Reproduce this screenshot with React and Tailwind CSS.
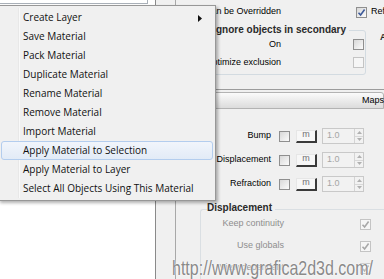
const menuFont = { fontFamily: '"Open Sans", "Noto Sans", sans-serif' }
const uiFont = { fontFamily: '"Liberation Sans", Arial, sans-serif' }

const items = [
  'Create Layer',
  'Save Material',
  'Pack Material',
  'Duplicate Material',
  'Rename Material',
  'Remove Material',
  'Import Material',
  'Apply Material to Selection',
  'Apply Material to Layer',
  'Select All Objects Using This Material',
]

function Check({ checked, disabled, tone }) {
  return (
    <div
      className={
        'w-[11px] h-[11px] shrink-0 border flex items-center justify-center ' +
        (disabled
          ? 'border-[#c4c4c4] bg-[#f6f6f6]'
          : 'border-[#8f8f8f] bg-gradient-to-br from-[#d8d8d8] to-[#fbfbfb]')
      }
    >
      {checked && (
        <svg width="9" height="9" viewBox="0 0 9 9">
          <path
            d="M1.5 4.8 L3.6 7 L7.6 1.6"
            fill="none"
            stroke={tone === 'blue' ? '#3d5a9a' : '#a8a8a8'}
            strokeWidth="1.6"
          />
        </svg>
      )}
    </div>
  )
}

function MapRow({ label }) {
  return (
    <div className="h-[20px] flex items-center mb-[4px]">
      <div className="w-[95px] shrink-0 text-right text-[9px] text-black whitespace-nowrap">{label}</div>
      <div className="ml-[8px]">
        <Check />
      </div>
      <div className="ml-[6px] w-[21px] h-[13px] shrink-0 flex items-center justify-center text-[9px] text-[#707070] bg-[#f7f7f7] border-t border-l border-t-[#e6e6e6] border-l-[#e6e6e6] border-b-2 border-r-2 border-b-[#3a3a3a] border-r-[#3a3a3a] leading-none pb-[2px]">
        m
      </div>
      <div className="ml-[5px] w-[42px] h-[16px] shrink-0 border border-[#c9c9c9] bg-[#f2f2f2] flex">
        <div className="flex-1 pl-[4px] text-[9px] text-[#a5a5a5] flex items-center">1.0</div>
        <div className="w-[9px] border-l border-[#d4d4d4] flex flex-col">
          <div className="flex-1 flex items-center justify-center border-b border-[#d8d8d8]">
            <svg width="5" height="3" viewBox="0 0 5 3"><path d="M0 3 L2.5 0 L5 3Z" fill="#b0b0b0" /></svg>
          </div>
          <div className="flex-1 flex items-center justify-center">
            <svg width="5" height="3" viewBox="0 0 5 3"><path d="M0 0 L2.5 3 L5 0Z" fill="#b0b0b0" /></svg>
          </div>
        </div>
      </div>
    </div>
  )
}

function DispRow({ label }) {
  return (
    <div className="h-[22px] flex items-center">
      <div className="w-[83px] shrink-0 text-right text-[9px] text-[#8e8e8e] whitespace-nowrap">{label}</div>
      <div className="ml-[76px]">
        <Check checked disabled />
      </div>
    </div>
  )
}

export default function App() {
  return (
    <div className="relative w-[384px] h-[279px] overflow-hidden bg-[#f0f0f0]" style={uiFont}>
      <div className="flex h-full">
        <div className="w-[156px] shrink-0 bg-white border-r border-[#8a8a8a]">
          <div className="h-[4px] w-[148px] border-b border-r border-[#a9b0b8]" />
        </div>
        <div className="w-[20px] shrink-0 bg-[#f0f0f0] border-r border-[#a8a8a8]" />

        <div className="flex-1 min-w-0 flex flex-col">
          <div className="h-[16px] mt-[5px] flex items-center">
            <div className="w-[105px] shrink-0 text-right text-[9px] text-black whitespace-nowrap">Can be Overridden</div>
            <div className="ml-[75px]">
              <Check checked tone="blue" />
            </div>
            <div className="ml-[4px] text-[9px] text-black whitespace-nowrap">Reflection</div>
          </div>

          <div className="flex mt-[11px]">
            <div className="ml-[7px] w-[183px] shrink-0 border border-[#d3dbe1] rounded-[3px] pb-[4px]">
              <div className="-mt-[8px] h-[14px] flex justify-end pr-[16px]">
                <span className="bg-[#f0f0f0] pl-[3px] pr-[3px] text-[10px] font-bold text-[#2a2a2a] leading-[14px] whitespace-nowrap">
                  Ignore objects in secondary
                </span>
              </div>
              <div className="h-[15px] flex items-center">
                <div className="w-[97px] shrink-0 text-right text-[9px] text-black">On</div>
                <div className="ml-[72px]">
                  <Check />
                </div>
              </div>
              <div className="h-[15px] mt-[3px] flex items-center">
                <div className="w-[97px] shrink-0 text-right text-[9px] text-black whitespace-nowrap">Optimize exclusion</div>
                <div className="ml-[72px]">
                  <Check disabled />
                </div>
              </div>
            </div>
            <div className="pl-[14px] pt-[1px] text-[9px] font-bold text-[#2a2a2a] whitespace-nowrap">Affect</div>
          </div>

          <div className="mt-[14px] h-px bg-[#9c9c9c]" />
          <div className="mt-[2px] ml-[4px] h-[19px] border border-[#b3b3b3] rounded-t-[3px] bg-gradient-to-b from-[#fbfbfb] to-[#dcdcdc] flex items-center pl-[181px] text-[9px] text-black">
            Maps
          </div>

          <div className="mt-[17px]">
            <MapRow label="Bump" />
            <MapRow label="Displacement" />
            <MapRow label="Refraction" />
          </div>

          <div className="mt-[11px] ml-[24px] w-[260px] shrink-0 border-t border-l border-[#dadfe3] rounded-tl-[3px]">
            <div className="-mt-[9px] h-[14px] pl-[6px] flex">
              <span className="bg-[#f0f0f0] pr-[3px] text-[10px] font-bold text-[#2a2a2a] leading-[14px]">Displacement</span>
            </div>
            <div className="-mt-[2px]">
              <DispRow label="Keep continuity" />
              <DispRow label="Use globals" />
              <DispRow label="View dependent" />
            </div>
          </div>
        </div>
      </div>

      <div
        className="absolute left-[-2px] top-[5px] w-[218px] border border-[#979797] bg-[#f0f0f0] py-[2px] shadow-[2px_2px_3px_rgba(0,0,0,0.3)]"
        style={menuFont}
      >
        <div className="absolute left-[19px] top-[2px] bottom-[2px] w-[2px] border-l border-[#e3e3e3] bg-white opacity-60" />
        {items.map((t, i) => (
          <div
            key={t}
            className={
              'relative h-[19px] mx-[2px] pl-[21px] flex items-center border rounded-[3px] text-[10px] text-[#111] whitespace-nowrap ' +
              (i === 7
                ? 'border-[#b3cdee] bg-gradient-to-b from-[#f1f5fb] to-[#e2ebf7]'
                : 'border-transparent')
            }
          >
            {t}
            {i === 0 && (
              <svg className="absolute right-[10px] top-[6px]" width="4" height="7" viewBox="0 0 4 7">
                <path d="M0 0 L4 3.5 L0 7Z" fill="#111" />
              </svg>
            )}
          </div>
        ))}
      </div>

      <div
        className="absolute left-[172px] top-[258px] origin-top-left scale-y-[1.3] text-[16px] leading-[16px] text-[#8a8a8a] whitespace-nowrap [text-shadow:0_0_1px_#fff,0_0_2px_#fff]"
      >
        http://www.grafica2d3d.com/
      </div>
    </div>
  )
}
